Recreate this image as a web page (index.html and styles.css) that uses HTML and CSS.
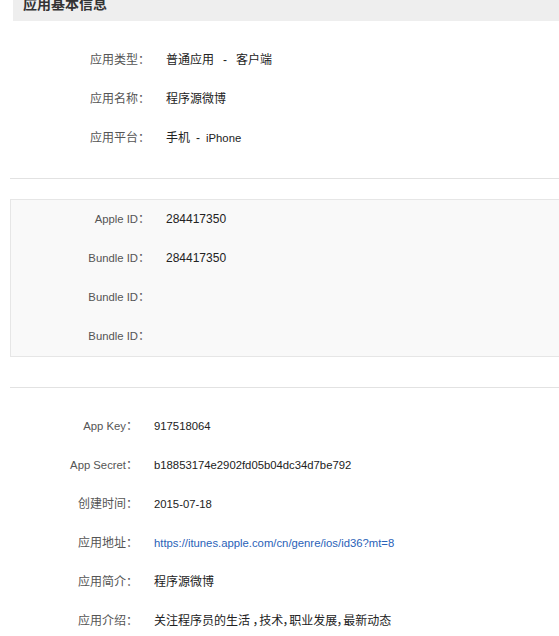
FILE: index.html
```html
<!DOCTYPE html>
<html lang="zh-CN">
<head>
<meta charset="utf-8">
<title>应用基本信息</title>
<link rel="stylesheet" href="styles.css">
</head>
<body>
<div class="page">
  <div class="panel-title">应用基本信息</div>

  <div class="section s1">
    <div class="row"><div class="label">应用类型：</div><div class="value">普通应用<span class="sep wide">-</span>客户端</div></div>
    <div class="row"><div class="label">应用名称：</div><div class="value">程序源微博</div></div>
    <div class="row"><div class="label">应用平台：</div><div class="value">手机<span class="sep">-</span><span class="en">iPhone</span></div></div>
  </div>

  <div class="divider"></div>

  <div class="idbox">
    <div class="row"><div class="label"><span class="en">Apple ID</span>：</div><div class="value num">284417350</div></div>
    <div class="row"><div class="label"><span class="en">Bundle ID</span>：</div><div class="value num">284417350</div></div>
    <div class="row"><div class="label"><span class="en">Bundle ID</span>：</div><div class="value num"></div></div>
    <div class="row"><div class="label"><span class="en">Bundle ID</span>：</div><div class="value num"></div></div>
  </div>

  <div class="divider d2"></div>

  <div class="section s3">
    <div class="row"><div class="label"><span class="en">App Key</span>：</div><div class="value en">917518064</div></div>
    <div class="row"><div class="label"><span class="en">App Secret</span>：</div><div class="value en">b18853174e2902fd05b04dc34d7be792</div></div>
    <div class="row"><div class="label">创建时间：</div><div class="value en">2015-07-18</div></div>
    <div class="row"><div class="label">应用地址：</div><div class="value en"><a class="link" href="#">https://itunes.apple.com/cn/genre/ios/id36?mt=8</a></div></div>
    <div class="row"><div class="label">应用简介：</div><div class="value">程序源微博</div></div>
    <div class="row"><div class="label">应用介绍：</div><div class="value prop">关注程序员的生活 ，技术，职业发展，最新动态</div></div>
  </div>
</div>
</body>
</html>
```

FILE: styles.css
```css
html, body {
  margin: 0;
  padding: 0;
  background: #ffffff;
  overflow: hidden;
}

body {
  font-family: "Liberation Sans", "Noto Sans CJK SC", sans-serif;
  font-size: 12px;
  color: #222222;
}

.page {
  padding-left: 10px;
}

.panel-title {
  margin-top: -10px;
  margin-left: 3px;
  height: 31px;
  line-height: 28px;
  padding-left: 10px;
  background: #eeeeee;
  font-size: 14px;
  font-weight: bold;
  color: #333333;
}

.section {
  display: flex;
  flex-direction: column;
}

.s1 {
  padding-top: 20px;
  padding-bottom: 20px;
}

.s3 {
  padding-top: 19px;
}

.row {
  display: grid;
  grid-template-columns: 140px 1fr;
  column-gap: 16px;
  height: 39px;
  line-height: 39px;
  white-space: nowrap;
}

.s3 .row {
  grid-template-columns: 128px 1fr;
}

.idbox .row {
  grid-template-columns: 139px 1fr;
}

.label {
  text-align: right;
  color: #555555;
}

.value {
  color: #222222;
}

.en {
  font-size: 11.3px;
}

.num {
  font-size: 12px;
}

.sep {
  margin: 0 6px;
}

.sep.wide {
  margin: 0 9px;
}

.link {
  color: #2a62b8;
  text-decoration: none;
}

.prop {
  font-feature-settings: "palt";
}

.divider {
  height: 1px;
  background: #e2e2e2;
  margin-right: -10px;
  margin-bottom: 20px;
}

.divider.d2 {
  margin-bottom: 0;
}

.idbox {
  display: flex;
  flex-direction: column;
  background: #f9f9f9;
  border: 1px solid #e6e6e6;
  border-right: none;
  margin-right: -10px;
  margin-bottom: 30px;
}
```
